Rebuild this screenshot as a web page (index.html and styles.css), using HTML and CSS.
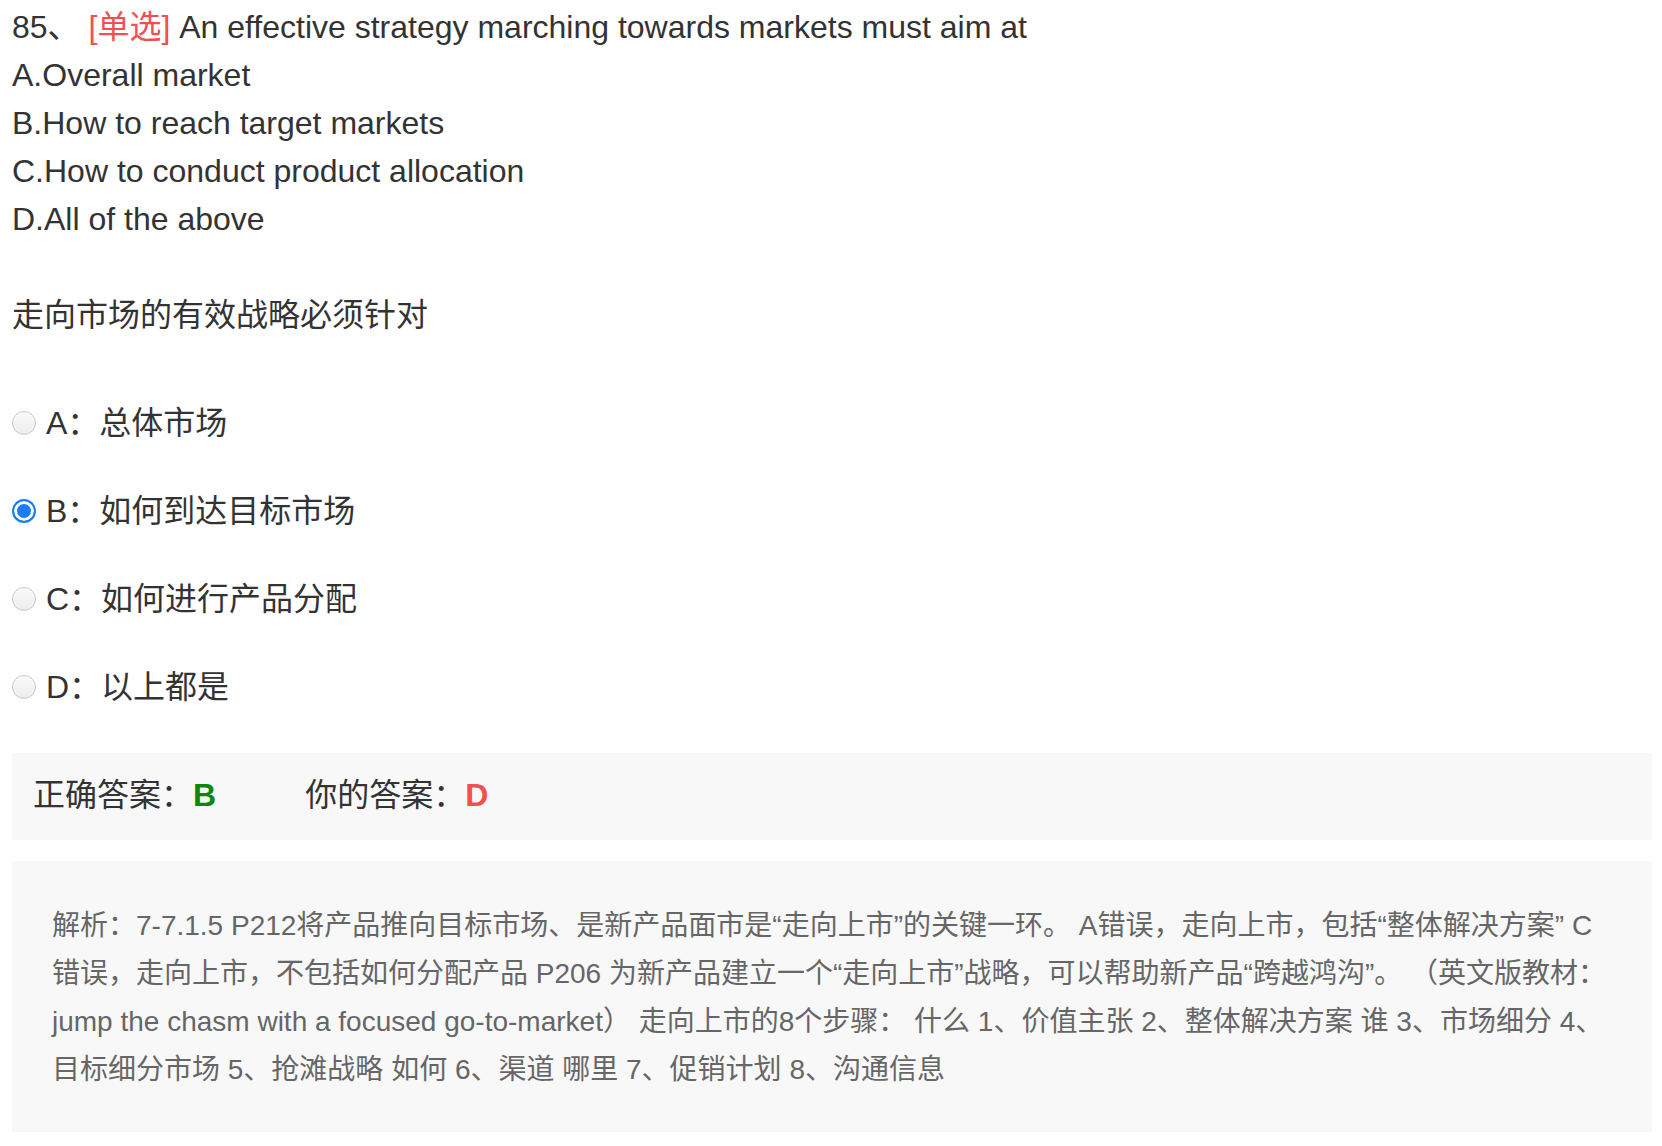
FILE: index.html
```html
<!DOCTYPE html>
<html lang="zh-CN">
<head>
<meta charset="utf-8">
<title>85 单选</title>
<link rel="stylesheet" href="styles.css">
</head>
<body>
<div class="page">
  <div class="question">
    <div class="q-line">85、 <span class="tag">[单选]</span> An effective strategy marching towards markets must aim at</div>
    <div class="q-line">A.Overall market</div>
    <div class="q-line">B.How to reach target markets</div>
    <div class="q-line">C.How to conduct product allocation</div>
    <div class="q-line">D.All of the above</div>
  </div>
  <div class="stem">走向市场的有效战略必须针对</div>
  <div class="options">
    <label class="option"><input type="radio" name="q85" class="radio"><span>A：总体市场</span></label>
    <label class="option"><input type="radio" name="q85" class="radio" checked><span>B：如何到达目标市场</span></label>
    <label class="option"><input type="radio" name="q85" class="radio"><span>C：如何进行产品分配</span></label>
    <label class="option"><input type="radio" name="q85" class="radio"><span>D：以上都是</span></label>
  </div>
  <div class="answer-box">
    <span class="answer-item">正确答案：<b class="correct">B</b></span>
    <span class="answer-item">你的答案：<b class="wrong">D</b></span>
  </div>
  <div class="analysis">解析：7-7.1.5 P212将产品推向目标市场、是新产品面市是“走向上市”的关键一环。 A错误，走向上市，包括“整体解决方案” C错误，走向上市，不包括如何分配产品 P206 为新产品建立一个“走向上市”战略，可以帮助新产品“跨越鸿沟”。 （英文版教材：jump the chasm with a focused go-to-market） 走向上市的8个步骤： 什么 1、价值主张 2、整体解决方案 谁 3、市场细分 4、目标细分市场 5、抢滩战略 如何 6、渠道 哪里 7、促销计划 8、沟通信息</div>
</div>
</body>
</html>
```

FILE: styles.css
```css
html, body {
  margin: 0;
  padding: 0;
  background: #ffffff;
}

body {
  font-family: "Liberation Sans", Arial, "Noto Sans CJK SC", sans-serif;
  color: #333333;
}

.page {
  width: 1640px;
  padding: 3px 10px 0 12px;
}

.question {
  font-size: 32px;
  line-height: 48px;
}

.tag {
  color: #f05050;
}

.stem {
  margin-top: 48px;
  font-size: 32px;
  line-height: 48px;
}

.options {
  margin-top: 60px;
  display: flex;
  flex-direction: column;
  gap: 40px;
}

.option {
  display: flex;
  align-items: center;
  height: 48px;
  font-size: 32px;
  line-height: 48px;
}

.radio {
  -webkit-appearance: none;
  appearance: none;
  box-sizing: border-box;
  width: 24px;
  height: 24px;
  margin: 0 10px 0 0;
  border-radius: 50%;
  border: 1px solid #c9c9c9;
  background: linear-gradient(#fafafa, #ededed);
  flex: none;
}

.radio:checked {
  border: 2px solid #1b7cf5;
  background: #1b7cf5;
  box-shadow: inset 0 0 0 3px #ffffff;
}

.answer-box {
  box-sizing: border-box;
  margin-top: 42px;
  height: 87px;
  display: flex;
  align-items: center;
  padding: 0 21px 9px 21px;
  background: #f8f8f8;
  font-size: 32px;
}

.answer-item + .answer-item {
  margin-left: 89px;
}

.correct {
  color: #0b870b;
}

.wrong {
  color: #f05050;
}

.analysis {
  margin-top: 21px;
  padding: 41px 40px 38px 40px;
  background: #f8f8f8;
  color: #666666;
  font-size: 28px;
  line-height: 48px;
}
```
